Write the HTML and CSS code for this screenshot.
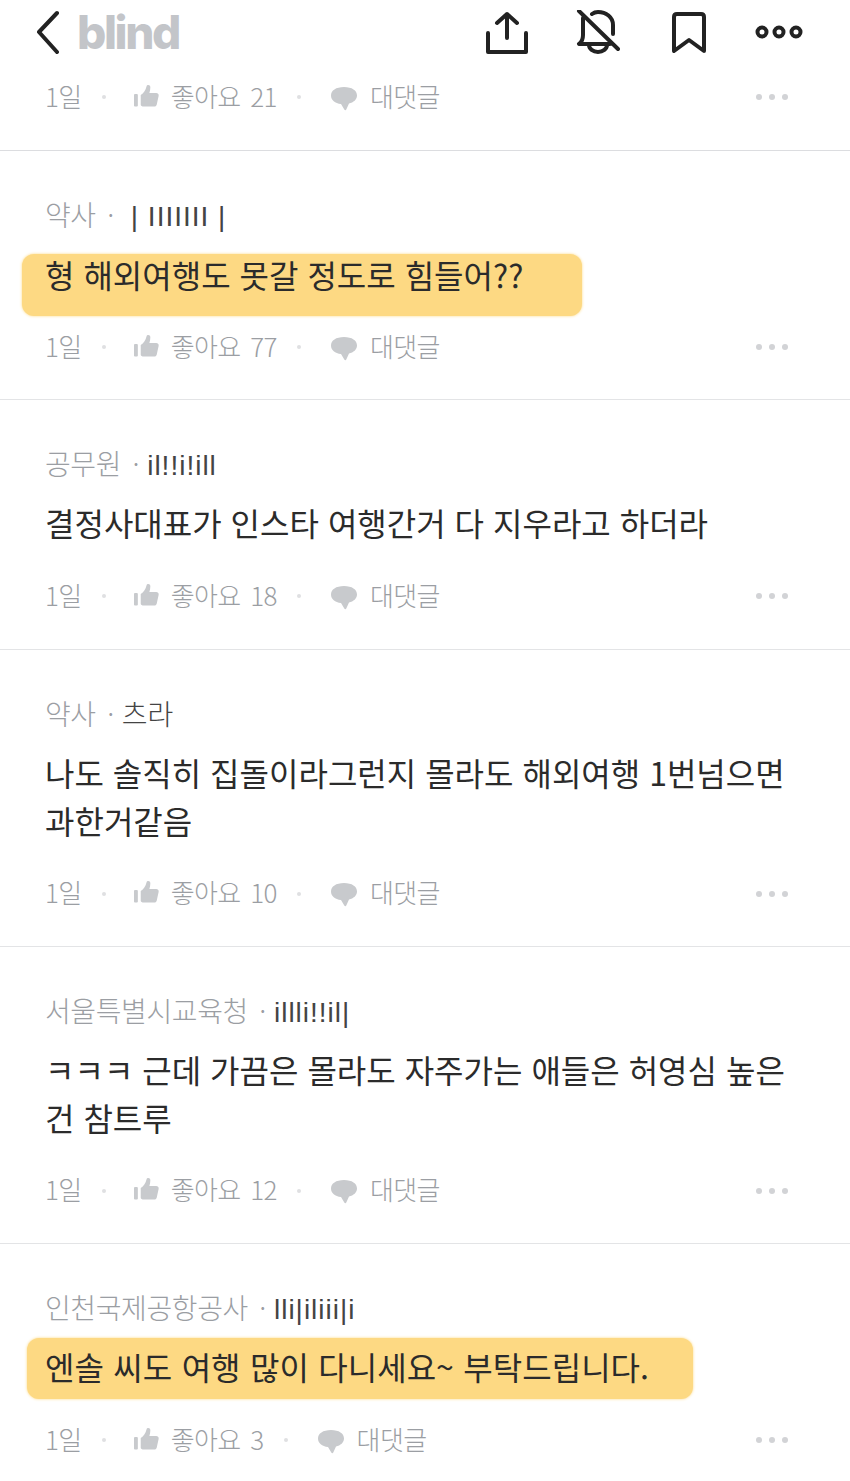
FILE: index.html
```html
<!DOCTYPE html>
<html lang="ko">
<head>
    <meta charset="UTF-8">
    <meta name="viewport" content="width=device-width, initial-scale=1.0">
    <title>blind</title>
    <link rel="stylesheet" href="styles.css">
</head>
<body>
    <svg class="defs" width="0" height="0">
        <symbol id="thumb" viewBox="0 0 26 24">
            <rect x="0" y="10" width="4" height="13" rx="1"/>
            <path d="M7 11 C10 9 12 6 13 2 C13.500 0 17 0 17 3 C17 5 16.600 7 16 9 L23 9 C25 9 26 10.500 25.600 12 L23.600 21 C23.300 22.400 22 23 21 23 L10 23 C8.500 23 7 22 7 21 Z"/>
        </symbol>
        <symbol id="bubble" viewBox="0 0 26 24">
            <path d="M13 0 C21 0 26 3.500 26 8.500 C26 12.500 22.500 15.500 18 16.500 L15.500 22 C15 23.500 14 23.500 13.300 22.500 L10 17 C4 16.500 0 13 0 8.500 C0 3.500 5 0 13 0 Z"/>
        </symbol>
    </svg>

    <header class="top">
        <svg class="back" width="24" height="44" viewBox="0 0 24 44"><path d="M21 3 L3 22 L21 42"/></svg>
        <span class="logo">blind</span>
        <div class="actions">
            <svg class="act" width="44" height="44" viewBox="0 0 44 44"><path d="M22 28 V4 M12 13 L22 4 L32 13 M3 23 V42 H41 V23"/></svg>
            <svg class="act" width="44" height="44" viewBox="0 0 44 44"><path d="M16 4 C18 2.500 20 2 22 2 C30 2 37 7 37 15 V24 M7 8 V25 C7 29 6 32 3 34 H34 M13 35 A9 7 0 0 0 31 35 M3 1 L42 39"/></svg>
            <svg class="act" width="44" height="44" viewBox="0 0 44 44"><path d="M7 41 V7 C7 5 8 4 10 4 H34 C36 4 37 5 37 7 V41 L22 30 Z"/></svg>
            <svg class="act dots" width="44" height="44" viewBox="0 0 44 44"><circle cx="4" cy="22" r="4.500"/><circle cx="21" cy="22" r="4.500"/><circle cx="38" cy="22" r="4.500"/></svg>
        </div>
    </header>

    <section class="comment first">
        <div class="meta">
            <span>1일</span><i class="sep"></i>
            <svg class="ico"><use href="#thumb"/></svg><span>좋아요 21</span><i class="sep"></i>
            <svg class="ico talk"><use href="#bubble"/></svg><span>대댓글</span>
            <div class="more"><i></i><i></i><i></i></div>
        </div>
    </section>

    <section class="comment">
        <div class="author">약사 ·<b class="far">| IIIIIII |</b></div>
        <p class="body"><span class="mark mark1">형 해외여행도 못갈 정도로 힘들어??</span></p>
        <div class="meta">
            <span>1일</span><i class="sep"></i>
            <svg class="ico"><use href="#thumb"/></svg><span>좋아요 77</span><i class="sep"></i>
            <svg class="ico talk"><use href="#bubble"/></svg><span>대댓글</span>
            <div class="more"><i></i><i></i><i></i></div>
        </div>
    </section>

    <section class="comment">
        <div class="author">공무원 ·<b>il!!i!ill</b></div>
        <p class="body">결정사대표가 인스타 여행간거 다 지우라고 하더라</p>
        <div class="meta">
            <span>1일</span><i class="sep"></i>
            <svg class="ico"><use href="#thumb"/></svg><span>좋아요 18</span><i class="sep"></i>
            <svg class="ico talk"><use href="#bubble"/></svg><span>대댓글</span>
            <div class="more"><i></i><i></i><i></i></div>
        </div>
    </section>

    <section class="comment">
        <div class="author">약사 ·<b class="name">츠라</b></div>
        <p class="body">나도 솔직히 집돌이라그런지 몰라도 해외여행 1번넘으면<br>과한거같음</p>
        <div class="meta">
            <span>1일</span><i class="sep"></i>
            <svg class="ico"><use href="#thumb"/></svg><span>좋아요 10</span><i class="sep"></i>
            <svg class="ico talk"><use href="#bubble"/></svg><span>대댓글</span>
            <div class="more"><i></i><i></i><i></i></div>
        </div>
    </section>

    <section class="comment">
        <div class="author">서울특별시교육청 ·<b>illli!!il|</b></div>
        <p class="body">ㅋㅋㅋ 근데 가끔은 몰라도 자주가는 애들은 허영심 높은<br>건 참트루</p>
        <div class="meta">
            <span>1일</span><i class="sep"></i>
            <svg class="ico"><use href="#thumb"/></svg><span>좋아요 12</span><i class="sep"></i>
            <svg class="ico talk"><use href="#bubble"/></svg><span>대댓글</span>
            <div class="more"><i></i><i></i><i></i></div>
        </div>
    </section>

    <section class="comment">
        <div class="author">인천국제공항공사 ·<b>lli|iliii|i</b></div>
        <p class="body"><span class="mark mark2">엔솔 씨도 여행 많이 다니세요~ 부탁드립니다.</span></p>
        <div class="meta">
            <span>1일</span><i class="sep"></i>
            <svg class="ico"><use href="#thumb"/></svg><span>좋아요 3</span><i class="sep"></i>
            <svg class="ico talk"><use href="#bubble"/></svg><span>대댓글</span>
            <div class="more"><i></i><i></i><i></i></div>
        </div>
    </section>
</body>
</html>
```

FILE: styles.css
```css
body{
    margin: 0;
    background-color: white;
    color: #2b2b2b;
    font-family: "Noto Sans CJK KR", "Liberation Sans", sans-serif;
    overflow: hidden;
}
.defs{
    position: absolute;
}
.top{
    display: flex;
    align-items: center;
    height: 44px;
    padding: 10px 48px 25px 36px;
}
.back path, .act path, .act circle{
    fill: none;
    stroke: #222;
    stroke-width: 4;
    stroke-linecap: round;
    stroke-linejoin: round;
}
.dots{
    overflow: visible;
}
.logo{
    margin-left: 17px;
    font-family: Inter, sans-serif;
    font-size: 46px;
    font-weight: 800;
    letter-spacing: -2.4px;
    color: #c3c5c9;
}
.actions{
    display: flex;
    gap: 47px;
    margin-left: auto;
}
.comment{
    padding: 45px 60px 34.33px 45px;
    border-top: 1px solid #e3e4e6;
}
.comment.first{
    padding-top: 0;
    padding-bottom: 35px;
    border-top: 0;
    border-bottom: 1px solid #dcdde0;
}
.comment.first + .comment{
    border-top: 0;
}
.author{
    height: 36px;
    line-height: 36px;
    font-size: 28px;
    font-weight: 300;
    letter-spacing: -0.4px;
    word-spacing: 4px;
    color: #9b9ea3;
}
.author b{
    margin-left: 8px;
    font-family: "Liberation Sans", sans-serif;
    font-weight: 400;
    letter-spacing: 1px;
    word-spacing: 0;
    color: #444;
}
.author .far{
    margin-left: 17px;
}
.author .name{
    font-family: "Noto Sans CJK KR", sans-serif;
    font-weight: 300;
    letter-spacing: 0;
}
.body{
    display: flow-root;
    margin: 17px 0 32px;
    font-size: 32px;
    line-height: 48px;
    font-weight: 400;
}
.mark{
    display: block;
    width: fit-content;
    background-color: #fdd983;
    border-radius: 12px;
    box-shadow: 0 0 3px #fdd983;
}
.mark1{
    line-height: 40px;
    padding: 0 59px 22px 23px;
    margin: 5px 0 -19px -23px;
}
.mark2{
    word-spacing: 0.5px;
    padding: 4px 44px 9px 18px;
    margin: -4px 0 -9px -18px;
}
.meta{
    display: flex;
    align-items: center;
    height: 36px;
    font-size: 26px;
    font-weight: 300;
    letter-spacing: -0.6px;
    word-spacing: 3px;
    color: #9b9ea3;
}
.meta span{
    padding-bottom: 4px;
}
.sep{
    width: 4px;
    height: 4px;
    margin: 0 28px 0 20px;
    border-radius: 50%;
    background-color: #dfe0e2;
}
.ico{
    width: 25px;
    height: 24px;
    margin-right: 12px;
    margin-bottom: 3px;
    fill: #c8cacd;
}
.talk{
    width: 26px;
    margin-left: 2px;
    margin-right: 13px;
    margin-bottom: 0;
    margin-top: 3px;
}
.more{
    display: flex;
    gap: 7px;
    margin-left: auto;
    margin-right: 2px;
}
.more i{
    width: 6px;
    height: 6px;
    border-radius: 50%;
    background-color: #d2d3d6;
}
```
